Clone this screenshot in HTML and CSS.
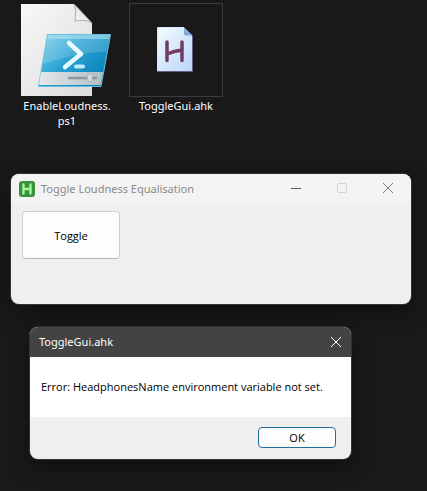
FILE: index.html
```
<!DOCTYPE html>
<html lang="en">
<head>
<meta charset="utf-8">
<meta name="viewport" content="width=device-width, initial-scale=1">
<title>Desktop</title>
<link rel="stylesheet" href="styles.css">
</head>
<body>
<main class="desktop">
  <ul class="files">
    <li class="file">
      <svg class="file-icon" viewBox="0 0 94 94" aria-hidden="true">
        <defs>
          <linearGradient id="paper" x1="0" y1="0" x2="1" y2="1">
            <stop offset="0" stop-color="#f8f8f8"/><stop offset="1" stop-color="#dcdcdc"/>
          </linearGradient>
          <linearGradient id="fold" x1="0" y1="1" x2="1" y2="0">
            <stop offset="0" stop-color="#fff"/><stop offset=".5" stop-color="#e4e4e4"/><stop offset="1" stop-color="#a8a8a8"/>
          </linearGradient>
          <linearGradient id="screen" x1="0" y1="0" x2="1" y2=".7">
            <stop offset="0" stop-color="#7dcfe8"/><stop offset=".5" stop-color="#2aa2d3"/><stop offset="1" stop-color="#087fb8"/>
          </linearGradient>
          <linearGradient id="bar" x1="0" y1="0" x2="1" y2="0">
            <stop offset="0" stop-color="#e6e8e9"/><stop offset="1" stop-color="#aebfc8"/>
          </linearGradient>
        </defs>
        <path d="M1 1H54L72 20V93H1Z" fill="url(#paper)"/>
        <path d="M54 1C56 6 56 12 55 18C61 17 67 17 72 20Z" fill="url(#fold)" stroke="#999" stroke-width=".8"/>
        <path d="M27.500 31.500H90.500L81 83.500H18.500Z" fill="url(#screen)" stroke="#67bfdc"/>
        <path d="M28 32H90L89 36H27Z" fill="#b9e7f2" opacity=".65"/>
        <path d="M27 36H89L86 49C65 49 45 54 23 61Z" fill="#fff" opacity=".16"/>
        <path d="M21 69H83L80.500 82H19Z" fill="url(#bar)"/>
        <path d="M49 40L61 51L45 64" fill="none" stroke="#e8fbff" stroke-width="4.500" stroke-linecap="round" stroke-linejoin="round"/>
        <path d="M56 63.500H63" stroke="#b9eef9" stroke-width="4" stroke-linecap="round"/>
        <path d="M49 75H76" stroke="#8d999e" stroke-width="2.500" stroke-linecap="round"/>
        <path d="M68 71H73L72 77L70 79L67 77Z" fill="#d5dadd" stroke="#a5adb1" stroke-width=".8"/>
      </svg>
      <span class="file-name">EnableLoudness.<wbr>ps1</span>
    </li>
    <li class="file file-focused">
      <svg class="file-icon" viewBox="0 0 94 94" aria-hidden="true">
        <defs>
          <linearGradient id="note" x1="0" y1="0" x2="1" y2="1">
            <stop offset="0" stop-color="#f4fbff"/><stop offset="1" stop-color="#b9d5fa"/>
          </linearGradient>
          <linearGradient id="note-fold" x1="0" y1="1" x2="1" y2="0">
            <stop offset="0" stop-color="#6793d8"/><stop offset=".6" stop-color="#9dbbe8"/><stop offset="1" stop-color="#3f5c96"/>
          </linearGradient>
        </defs>
        <path d="M28.500 24.500H55L63.500 33V68.500H28.500Z" fill="url(#note)"/>
        <path d="M28.500 68.500H63.500V33" fill="none" stroke="#675a86"/>
        <path d="M28.500 68V24.500H55" fill="none" stroke="#d3e6fb"/>
        <path d="M55 24.500V31L56.500 32.500H63.500Z" fill="url(#note-fold)"/>
        <path d="M38 39V57.500M53 39V57.500M38 51Q45 48 53 47" fill="none" stroke="#733b5f" stroke-width="3.500" stroke-linecap="round"/>
      </svg>
      <span class="file-name">ToggleGui.ahk</span>
    </li>
  </ul>

  <section class="window app" aria-labelledby="app-title">
    <header class="titlebar">
      <svg class="app-icon" viewBox="0 0 16 16" aria-hidden="true">
        <rect width="16" height="16" rx="3" fill="#39933b"/>
        <path d="M4.500 3.500V12.500M11.500 3.500V12.500M4.500 8H11.500" fill="none" stroke="#a3f5a0" stroke-width="2.400" stroke-linecap="round"/>
      </svg>
      <h1 class="title" id="app-title">Toggle Loudness Equalisation</h1>
      <div class="controls">
        <button class="control" type="button" aria-label="Minimize"><svg viewBox="0 0 12 12"><path d="M1 6.500H11" stroke="#606060"/></svg></button>
        <button class="control" type="button" aria-label="Maximize" disabled><svg viewBox="0 0 12 12"><rect x="1.500" y="1.500" width="9" height="9" rx="1" fill="none" stroke="#d4d4d4"/></svg></button>
        <button class="control" type="button" aria-label="Close"><svg viewBox="0 0 12 12"><path d="M1 1L11 11M11 1L1 11" stroke="#808080"/></svg></button>
      </div>
    </header>
    <div class="app-body">
      <button class="toggle" type="button">Toggle</button>
    </div>
  </section>

  <section class="window dialog" role="alertdialog" aria-labelledby="dialog-title" aria-describedby="dialog-message">
    <header class="titlebar dialog-bar">
      <h2 class="title" id="dialog-title">ToggleGui.ahk</h2>
      <button class="control dialog-close" type="button" aria-label="Close"><svg viewBox="0 0 12 12"><path d="M1 1L11 11M11 1L1 11" stroke="#fff"/></svg></button>
    </header>
    <p class="message" id="dialog-message">Error: HeadphonesName environment variable not set.</p>
    <footer class="actions">
      <button class="ok" type="button">OK</button>
    </footer>
  </section>
</main>
</body>
</html>
```
FILE: styles.css
```
* {
  box-sizing: border-box;
}

body {
  margin: 0;
  background: #191919;
  font-family: "Open Sans", "Noto Sans", sans-serif;
  font-size: 11px;
}

button {
  padding: 0;
  font-family: inherit;
}

.desktop {
  display: flex;
  flex-direction: column;
  min-height: 100vh;
  padding-top: 3px;
}

/* Desktop files */
.files {
  display: flex;
  gap: 15px;
  margin: 0 0 46px;
  padding: 0 20px;
  list-style: none;
}

.file {
  display: flex;
  flex-direction: column;
  align-items: center;
  width: 94px;
  color: #fff;
  line-height: 15px;
  text-align: center;
}

.file-icon {
  width: 94px;
  height: 94px;
  margin-bottom: 1px;
}

.file-focused .file-icon {
  outline: 1px solid #3c3c3c;
  outline-offset: -1px;
}

.file-name,
.title {
  font-family: "Noto Sans", sans-serif;
  font-size: 11px;
}

/* Windows */
.window {
  overflow: hidden;
  border-radius: 8px;
  background: #efefef;
  box-shadow: 0 0 0 1px #333, 0 8px 20px #0006;
}

.titlebar {
  display: flex;
  align-items: center;
  height: 30px;
  padding-left: 8px;
  background: #f3f3f3;
  color: #8a8a8a;
}

.title {
  margin: 0;
  font-weight: 400;
  line-height: 16px;
  white-space: nowrap;
}

.app-icon {
  width: 16px;
  height: 16px;
  margin-right: 6px;
}

.controls {
  display: flex;
  height: 100%;
  margin-left: auto;
}

.control {
  display: flex;
  align-items: center;
  justify-content: center;
  width: 46px;
  height: 28px;
  border: 0;
  background: transparent;
}

.control svg {
  width: 12px;
  height: 12px;
}

.app {
  margin: 0 16px 23px 11px;
}

.app-body {
  min-height: 100px;
  padding: 7px 11px;
}

.toggle {
  width: 98px;
  height: 48px;
  border: 1px solid #d0d0d0;
  border-bottom-color: #b8b8b8;
  border-radius: 4px;
  background: #fdfdfd;
  color: #000;
  font-size: 11px;
}

.dialog {
  margin: 0 76px 0 30px;
}

.dialog-bar {
  padding-left: 9px;
  background: #434343;
  color: #fff;
}

.dialog-close {
  width: 30px;
  margin-left: auto;
}

.message {
  margin: 0;
  padding: 22px 11px;
  background: #fff;
  color: #000;
  font-size: 11px;
  line-height: 16px;
}

.actions {
  display: flex;
  justify-content: flex-end;
  padding: 10px 15px 11px;
}

.ok {
  width: 78px;
  height: 21px;
  border: 1px solid #20709f;
  border-radius: 4px;
  background: #fdfdfd;
  color: #000;
  font-size: 11px;
}
```
